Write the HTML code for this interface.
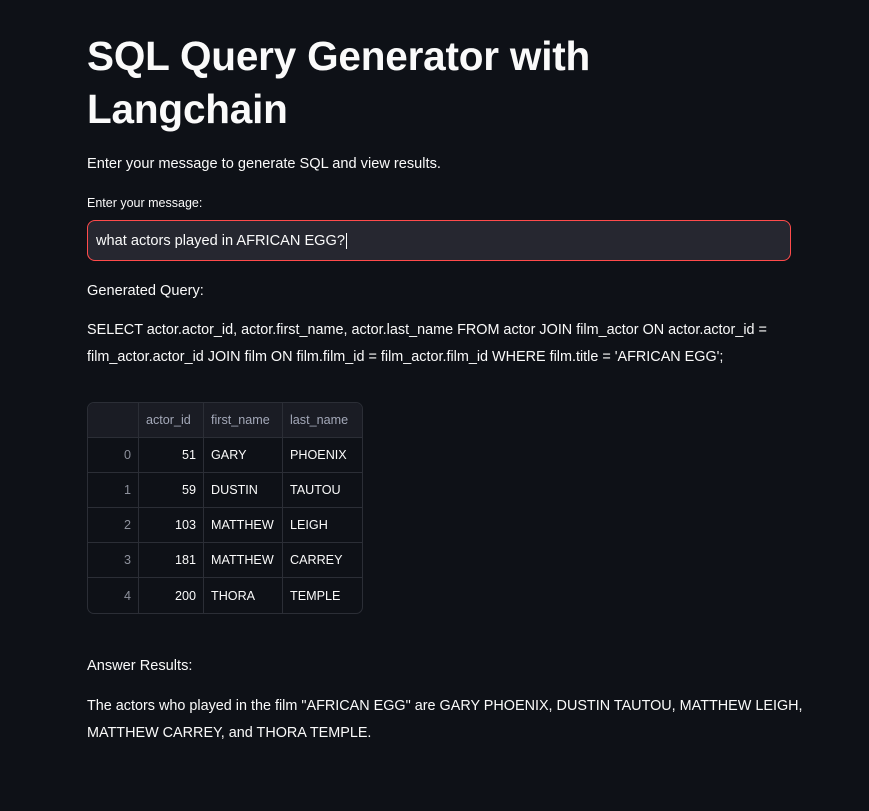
<!DOCTYPE html>
<html><head><meta charset="utf-8"><style>
*{margin:0;padding:0;box-sizing:border-box}
body{background:#0e1117;color:#fafafa;font-family:"Liberation Sans",sans-serif;width:869px;height:811px;overflow:hidden;position:relative}
.a{position:absolute;left:87px;white-space:nowrap}
h1{position:absolute;left:87px;top:30px;font-size:40.5px;line-height:53px;font-weight:700;letter-spacing:-0.2px}
p{font-size:14.6px;line-height:28px}
.input{position:absolute;left:87px;top:220px;width:704px;height:41px;background:#262730;border:1px solid #ff4b4b;border-radius:8px;font-size:14.6px;padding:12px 8px 0;}
table{position:absolute;left:87px;top:402px;width:274px;table-layout:fixed;border-collapse:separate;border-spacing:0;border:1px solid #2b2e36;border-radius:7px;overflow:hidden;font-size:12.6px}
td,th{height:35px;border-right:1px solid #2b2e36;border-bottom:1px solid #2b2e36;padding:0 7px;font-weight:400;white-space:nowrap;overflow:hidden}
th{background:#1a1c24;color:#a3a8b8;text-align:left}
tr:last-child td{border-bottom:none}
td:last-child,th:last-child{border-right:none}
td.i{color:#8d919c;text-align:right}
td.n{text-align:right}
</style></head><body>
<h1>SQL Query Generator with<br>Langchain</h1>
<p class="a" style="top:150px">Enter your message to generate SQL and view results.</p>
<div class="a" style="top:196px;font-size:12.5px">Enter your message:</div>
<div class="input">what actors played in AFRICAN EGG?<span style="border-left:1px solid #fff;margin-left:1px"></span></div>
<p class="a" style="top:277px">Generated Query:</p>
<p class="a" style="top:317px;white-space:normal;width:720px;font-size:14.4px;line-height:27px">SELECT actor.actor_id, actor.first_name, actor.last_name FROM actor JOIN film_actor ON actor.actor_id = film_actor.actor_id JOIN film ON film.film_id = film_actor.film_id WHERE film.title = 'AFRICAN EGG';</p>
<table>
<colgroup><col style="width:51px"><col style="width:65px"><col style="width:79px"><col style="width:79px"></colgroup>
<tr><th></th><th>actor_id</th><th>first_name</th><th>last_name</th></tr>
<tr><td class="i">0</td><td class="n">51</td><td>GARY</td><td>PHOENIX</td></tr>
<tr><td class="i">1</td><td class="n">59</td><td>DUSTIN</td><td>TAUTOU</td></tr>
<tr><td class="i">2</td><td class="n">103</td><td>MATTHEW</td><td>LEIGH</td></tr>
<tr><td class="i">3</td><td class="n">181</td><td>MATTHEW</td><td>CARREY</td></tr>
<tr><td class="i">4</td><td class="n">200</td><td>THORA</td><td>TEMPLE</td></tr>
</table>
<p class="a" style="top:652px">Answer Results:</p>
<p class="a" style="top:693px;white-space:normal;width:720px;font-size:14.4px;line-height:27px">The actors who played in the film "AFRICAN EGG" are GARY PHOENIX, DUSTIN TAUTOU, MATTHEW LEIGH, MATTHEW CARREY, and THORA TEMPLE.</p>
</body></html>
